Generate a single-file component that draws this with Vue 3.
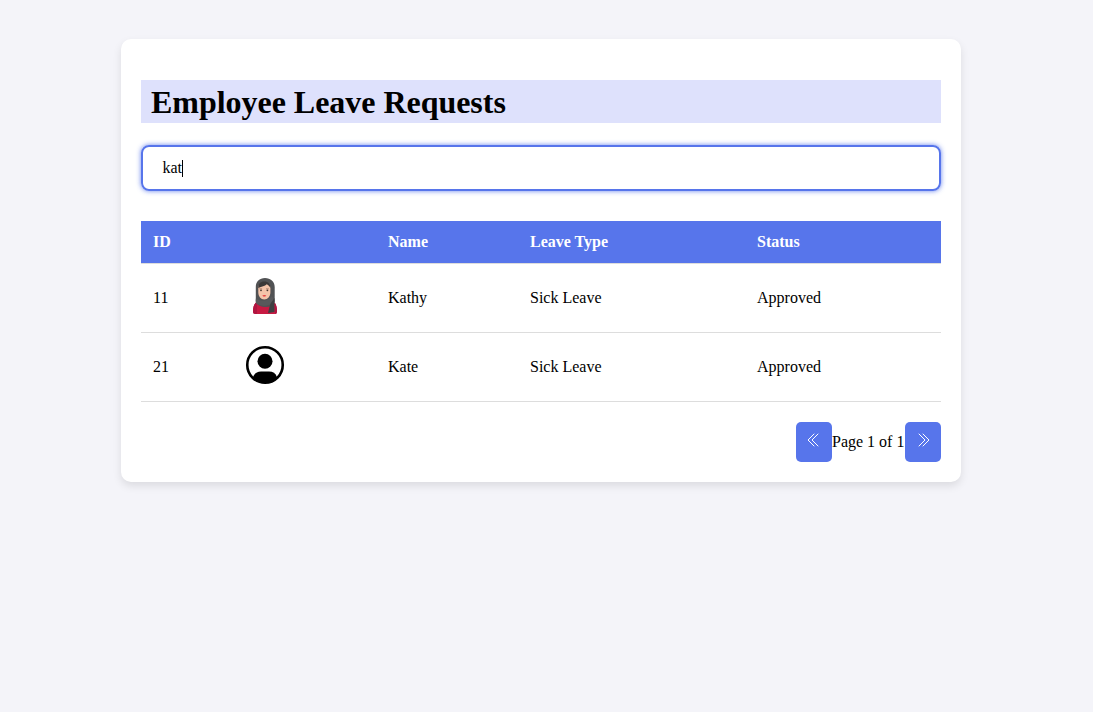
<script setup>
import { ref } from 'vue'

const query = ref('kat')
const employees = [
  { id: 11, name: 'Kathy', type: 'Sick Leave', status: 'Approved', photo: true },
  { id: 21, name: 'Kate', type: 'Sick Leave', status: 'Approved', photo: false },
]
</script>

<template>
  <div class="screen">
    <main class="card">
      <h1 class="title">Employee Leave Requests</h1>
      <div class="search" role="textbox"><span>{{ query }}</span><i class="caret"></i></div>
      <table class="requests">
        <colgroup>
          <col class="c-id" /><col class="c-photo" /><col class="c-name" /><col class="c-type" /><col />
        </colgroup>
        <thead>
          <tr><th>ID</th><th></th><th>Name</th><th>Leave Type</th><th>Status</th></tr>
        </thead>
        <tbody>
          <tr v-for="e in employees" :key="e.id">
            <td>{{ e.id }}</td>
            <td class="photo">
              <svg v-if="e.photo" class="avatar" viewBox="0 1 40 40">
                <path d="M8 36.500c0-5.500 1.500-9.500 6-10.500h12c4.500 1 6 5 6 10.500q0 2.500-2.500 2.500h-19Q8 39 8 36.500z" fill="#c71a42" />
                <path d="M8 36.500c0-4.500 1-8 4-9.700V39h-1.500Q8 39 8 36.500zM30 28c1.500 2 2 5 2 8.500q0 2.500-2 2.500z" fill="#b01540" />
                <path d="M20 3c-5.500 0-9.200 3.500-9.200 9v10.500c0 3-.5 4.500.7 6 2 2.300 5 3.500 8.500 3.500 5 0 9.700-2 9.700-5.500V12C29.700 6.500 25.500 3 20 3z" fill="#515254" />
                <path d="M13.300 13c0-3.500 2.200-5.500 5.900-5.500s6.200 2 6.200 5.500v4.500c0 3.700-2.700 7-6.100 7s-6-3.300-6-7z" fill="#f5c4aa" />
                <path d="M13.300 13c-.2-4 2-6.500 6-6.500s6.300 2.500 6.100 6.500c-1-1.800-2-3-3.600-3.800-2 2-5 2.300-8.500 3.800z" fill="#3b3838" />
                <path d="M11 23.500c4 3 11 3.500 16-2.500l2.500 5c-2 4-12.500 7-18 2.500-.9-1.500-.7-3-.5-5z" fill="#58595b" />
                <path d="M25.500 28.500l4-5.500v14l-6.500 1c1-3.500 1.300-6 2.500-9.500z" fill="#3e3f41" />
                <path d="M14.300 13.800h2.800M21 13.800h2.800" stroke="#8c6252" stroke-width=".6" />
                <circle cx="16" cy="15.300" r=".9" fill="#49362f" />
                <circle cx="22.400" cy="15.300" r=".9" fill="#49362f" />
                <path d="M17.300 20.400q2-1 4 0-2 2.400-4 0z" fill="#e83a3d" />
              </svg>
              <svg v-else class="avatar" viewBox="0 0 40 40">
                <defs><clipPath id="face-ring"><circle cx="20" cy="20" r="18" /></clipPath></defs>
                <circle cx="20" cy="20" r="17.750" fill="none" stroke="#000" stroke-width="2.600" />
                <circle cx="20" cy="16.300" r="7.500" />
                <path clip-path="url(#face-ring)" d="M5 40l3-8c1.500-3.700 4-5.500 8-5.500h8c4 0 6.500 1.800 8 5.500l3 8z" />
              </svg>
            </td>
            <td>{{ e.name }}</td>
            <td>{{ e.type }}</td>
            <td>{{ e.status }}</td>
          </tr>
        </tbody>
      </table>
      <nav class="pager">
        <button type="button" aria-label="Previous">
          <svg viewBox="0 0 16 16"><path d="M8 2L2 8l6 6M12 2L6 8l6 6" /></svg>
        </button>
        <span class="page">Page 1 of 1</span>
        <button type="button" aria-label="Next">
          <svg viewBox="0 0 16 16"><path d="M4 2l6 6-6 6M8 2l6 6-6 6" /></svg>
        </button>
      </nav>
    </main>
  </div>
</template>

<style>
body { background: #f4f4f9; }
</style>

<style scoped>
.screen {
  box-sizing: border-box;
  min-height: 100vh;
  padding: 39px 0 0 121px;
  background: #f4f4f9;
}
.card {
  box-sizing: border-box;
  width: 840px;
  height: 443px;
  padding: 41px 20px 20px;
  background: #fff;
  border-radius: 10px;
  box-shadow: 0 4px 8px rgba(0, 0, 0, 0.1);
  font: 16px/18px "Liberation Serif", "Times New Roman", serif;
  color: #000;
}
.title {
  box-sizing: border-box;
  margin: 0 0 22px;
  padding: 1px 0 0 10px;
  height: 43px;
  font-size: 32px;
  line-height: 43px;
  letter-spacing: -0.03px;
  background: #dee1fc;
}
.search {
  box-sizing: border-box;
  display: flex;
  align-items: center;
  height: 46px;
  padding-left: 19.500px;
  border: 2px solid #5775eb;
  border-radius: 8px;
  box-shadow: 0 0 5px rgba(87, 117, 235, 0.9);
}
.caret { width: 1px; height: 17px; background: #000; }
.requests {
  width: 800px;
  margin-top: 30px;
  border-collapse: separate;
  border-spacing: 0;
  table-layout: fixed;
}
.c-id { width: 93px; }
.c-photo { width: 142px; }
.c-name { width: 142px; }
.c-type { width: 227px; }
th, td {
  box-sizing: border-box;
  padding: 0 12px;
  text-align: left;
  border-bottom: 1px solid #ddd;
}
th { height: 43px; background: #5775eb; color: #fff; }
td { height: 69px; }
.photo { padding: 0 11px; }
.avatar { display: block; width: 40px; height: 40px; margin-top: -4px; }
.pager {
  display: flex;
  justify-content: flex-end;
  align-items: center;
  margin-top: 20px;
}
.page { width: 73px; white-space: nowrap; }
.pager button {
  display: flex;
  justify-content: center;
  align-items: center;
  width: 36px;
  height: 40px;
  padding: 0 0 4px;
  border: 0;
  border-radius: 5px;
  background: #5775eb;
}
.pager svg {
  width: 16px;
  height: 16px;
  fill: none;
  stroke: #fff;
  stroke-width: 1;
  stroke-linecap: round;
  stroke-linejoin: round;
}
</style>
